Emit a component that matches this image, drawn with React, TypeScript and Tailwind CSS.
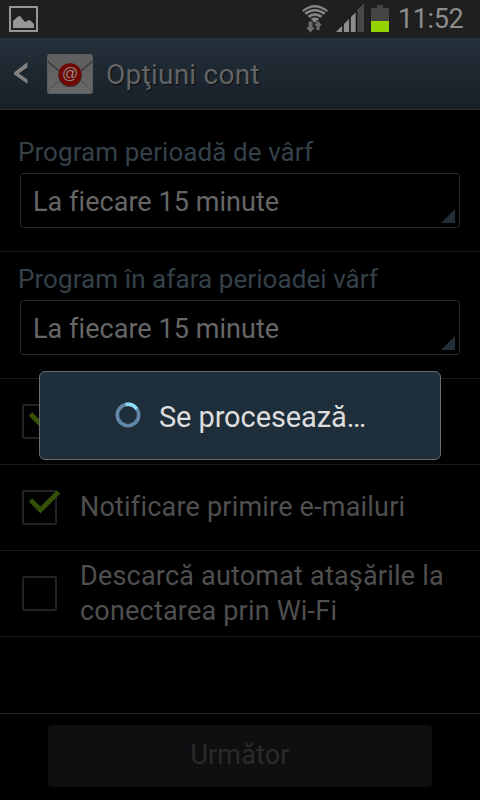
import React from 'react';

function PictureIcon() {
  return (
    <svg width="29" height="26" viewBox="0 0 29 26" className="shrink-0">
      <rect x="1" y="1" width="27" height="24" fill="none" stroke="#969696" strokeWidth="2" />
      <path d="M4 22V15L9 10.500L11 10L16 16L20 14L22 15L25 18V22Z" fill="#969696" />
    </svg>
  );
}

function WifiIcon() {
  return (
    <svg width="28" height="29" viewBox="0 0 28 29" className="shrink-0">
      <path d="M1 6.500Q14 -4.500 27 6.500L14 19Z" fill="#868686" />
      <g fill="none" stroke="#1f1f1f" strokeWidth="1.300">
        <path d="M2 9Q14 -0.500 26 9" />
        <path d="M5 12Q14 4.500 23 12" />
        <path d="M8 15.200Q14 9.800 20 15.200" />
      </g>
      <path d="M7.500 17.500H11.500V23.500H14L9.500 28.500L5 23.500H7.500Z" fill="#6c6c6c" />
      <path d="M15 26.500V22H12.500L17 16L21.500 22H19V26.500Z" fill="#6c6c6c" stroke="#1f1f1f" strokeWidth="0.8" />
    </svg>
  );
}

function SignalIcon() {
  return (
    <svg width="28" height="28" viewBox="0 0 28 28" className="shrink-0">
      <path d="M0 28L28 0V28Z" fill="#8d8d8d" />
      <path d="M21 7L28 0V28H21Z" fill="#484848" />
      <path d="M7 20V28M14 13V28M20.500 7V28" stroke="#141414" strokeWidth="1.600" />
    </svg>
  );
}

function BatteryIcon() {
  return (
    <svg width="18" height="27" viewBox="0 0 18 27" className="shrink-0">
      <path d="M0 3H6V0H12V3H18V16H0Z" fill="#444444" />
      <rect y="16" width="18" height="11" fill="#93d300" />
    </svg>
  );
}

function MailIcon() {
  return (
    <svg width="46" height="40" viewBox="0 0 46 40" className="shrink-0">
      <defs>
        <linearGradient id="paper" x1="0" y1="0" x2="0" y2="1">
          <stop offset="0" stopColor="#5c5c5c" />
          <stop offset="1" stopColor="#686868" />
        </linearGradient>
      </defs>
      <rect x="0.5" y="0.5" width="45" height="39" rx="2" fill="url(#paper)" stroke="#5c5c5c" />
      <path d="M1 37L19 20H27L45 37" fill="none" stroke="#4b4b4b" />
      <path d="M0.500 7L20 24H26L45.500 7V2Q45.500 .5 44 .5H2Q.5 .5 .5 2Z" fill="#5f5f5f" />
      <path d="M0.500 7L20 24H26L45.500 7" fill="none" stroke="#363636" strokeWidth="1.100" />
      <circle cx="23" cy="21.300" r="11.800" fill="#3d302f" />
      <circle cx="23" cy="20.500" r="11.300" fill="#710804" />
      <text x="23" y="25" textAnchor="middle" fontSize="16" fontFamily="Liberation Sans, sans-serif" fill="#8f8585">@</text>
    </svg>
  );
}

function Spinner({ label }: { label: string }) {
  return (
    <section className="px-5 pt-2">
      <div className="h-10 -ml-[2px] text-[26px] leading-[38px] tracking-[0.07px] text-[#344149] whitespace-nowrap">{label}</div>
      <div className="h-[55px] rounded-[3px] border border-[#1c272e] flex items-center pl-[12px] pr-1">
        <span className="flex-1 pt-[3px] text-[27px] leading-[36px] tracking-[0.05px] text-[#666] whitespace-nowrap">La fiecare 15 minute</span>
        <svg width="14" height="14" viewBox="0 0 14 14" className="self-end mb-1"><path d="M0 14L14 0V14Z" fill="#242e36" /></svg>
      </div>
    </section>
  );
}

function CheckRow({ checked, children }: { checked?: boolean; children?: React.ReactNode }) {
  return (
    <div className="h-[86px] border-t border-[#191b1b] flex items-center pl-[22px]">
      <svg width="39" height="37" viewBox="0 0 39 37" className="shrink-0">
        <rect x="1" y="2" width="33" height="33" rx="1" fill="none" stroke="#202427" strokeWidth="2" />
        {checked && <path d="M8.500 11L18.500 21L36.500 3" fill="none" stroke="#345107" strokeWidth="4.800" />}
      </svg>
      <div className="ml-[19px] text-[27px] leading-[35px] tracking-[0.2px] text-[#4f4f4f] whitespace-nowrap">{children}</div>
    </div>
  );
}

export default function App() {
  return (
    <main className="relative w-[480px] h-[800px] overflow-hidden bg-black font-['Roboto',sans-serif] flex flex-col">
      <header className="h-[38px] shrink-0 bg-[#1f1f1f] flex items-start pl-[9px]">
        <div className="pt-[6px]"><PictureIcon /></div>
        <div className="ml-[263px] pt-1"><WifiIcon /></div>
        <div className="ml-[7px] pt-1"><SignalIcon /></div>
        <div className="ml-[7px] pt-[5px]"><BatteryIcon /></div>
        <span className="ml-[9px] text-[27px] leading-[38px] tracking-[-0.4px] text-[#8c8c8c]">11:52</span>
      </header>
      <nav className="h-[72px] shrink-0 bg-linear-to-b from-[#24303a] to-[#181f27] border-b border-[#252c31] flex items-center pl-[13px]">
        <svg width="16" height="24" viewBox="0 0 16 24" className="shrink-0 mt-px">
          <path d="M14.500 1.500V7L6 12.500L14.500 18.500V23L1 13V11.500Z" fill="#101419" />
          <path d="M14.500 0V5.500L6 11.500L14.500 17.500V22L1 12.500V10.500Z" fill="#808080" />
        </svg>
        <div className="ml-[18px]"><MailIcon /></div>
        <h1 className="ml-[13px] pt-[3px] text-[28px] leading-[38px] tracking-[0.25px] text-[#626466] [text-shadow:1px_1px_1px_#090c0f] whitespace-nowrap">Opţiuni cont</h1>
      </nav>
      <div className="mt-[15px] h-[126px] shrink-0"><Spinner label="Program perioadă de vârf" /></div>
      <div className="h-[127px] shrink-0 border-t border-[#191b1b]"><Spinner label="Program în afara perioadei vârf" /></div>
      <div className="shrink-0 border-b border-[#191b1b]">
        <CheckRow checked />
        <CheckRow checked>Notificare primire e-mailuri</CheckRow>
        <CheckRow>Descarcă automat ataşările la<br />conectarea prin Wi-Fi</CheckRow>
      </div>
      <div className="flex-1" />
      <footer className="h-[87px] shrink-0 border-t border-[#202020] px-12 pt-[11px]">
        <button className="block w-full h-[62px] pb-[2px] rounded bg-[#0e0f11] text-[27px] leading-[60px] tracking-[0.15px] text-[#2b2b2b]">Următor</button>
      </footer>
      <div role="dialog" className="absolute left-[39px] top-[371px] w-[402px] h-[89px] rounded-[6px] border border-[#6a6c6d] bg-[#1f2e3b] flex items-center pl-[75px]">
        <svg width="26" height="26" viewBox="0 0 26 26" className="shrink-0 -mt-px">
          <circle cx="13" cy="13" r="10.700" fill="none" stroke="#6387a6" strokeWidth="3.600" />
          <path d="M10.500 2.600A10.700 10.700 0 0 1 21.800 7" fill="none" stroke="#8edcfa" strokeWidth="3.600" />
        </svg>
        <span className="ml-[18px] mt-[3px] text-[29px] leading-[40px] tracking-[-0.1px] text-[#dedede] whitespace-nowrap">Se procesează…</span>
      </div>
    </main>
  );
}
